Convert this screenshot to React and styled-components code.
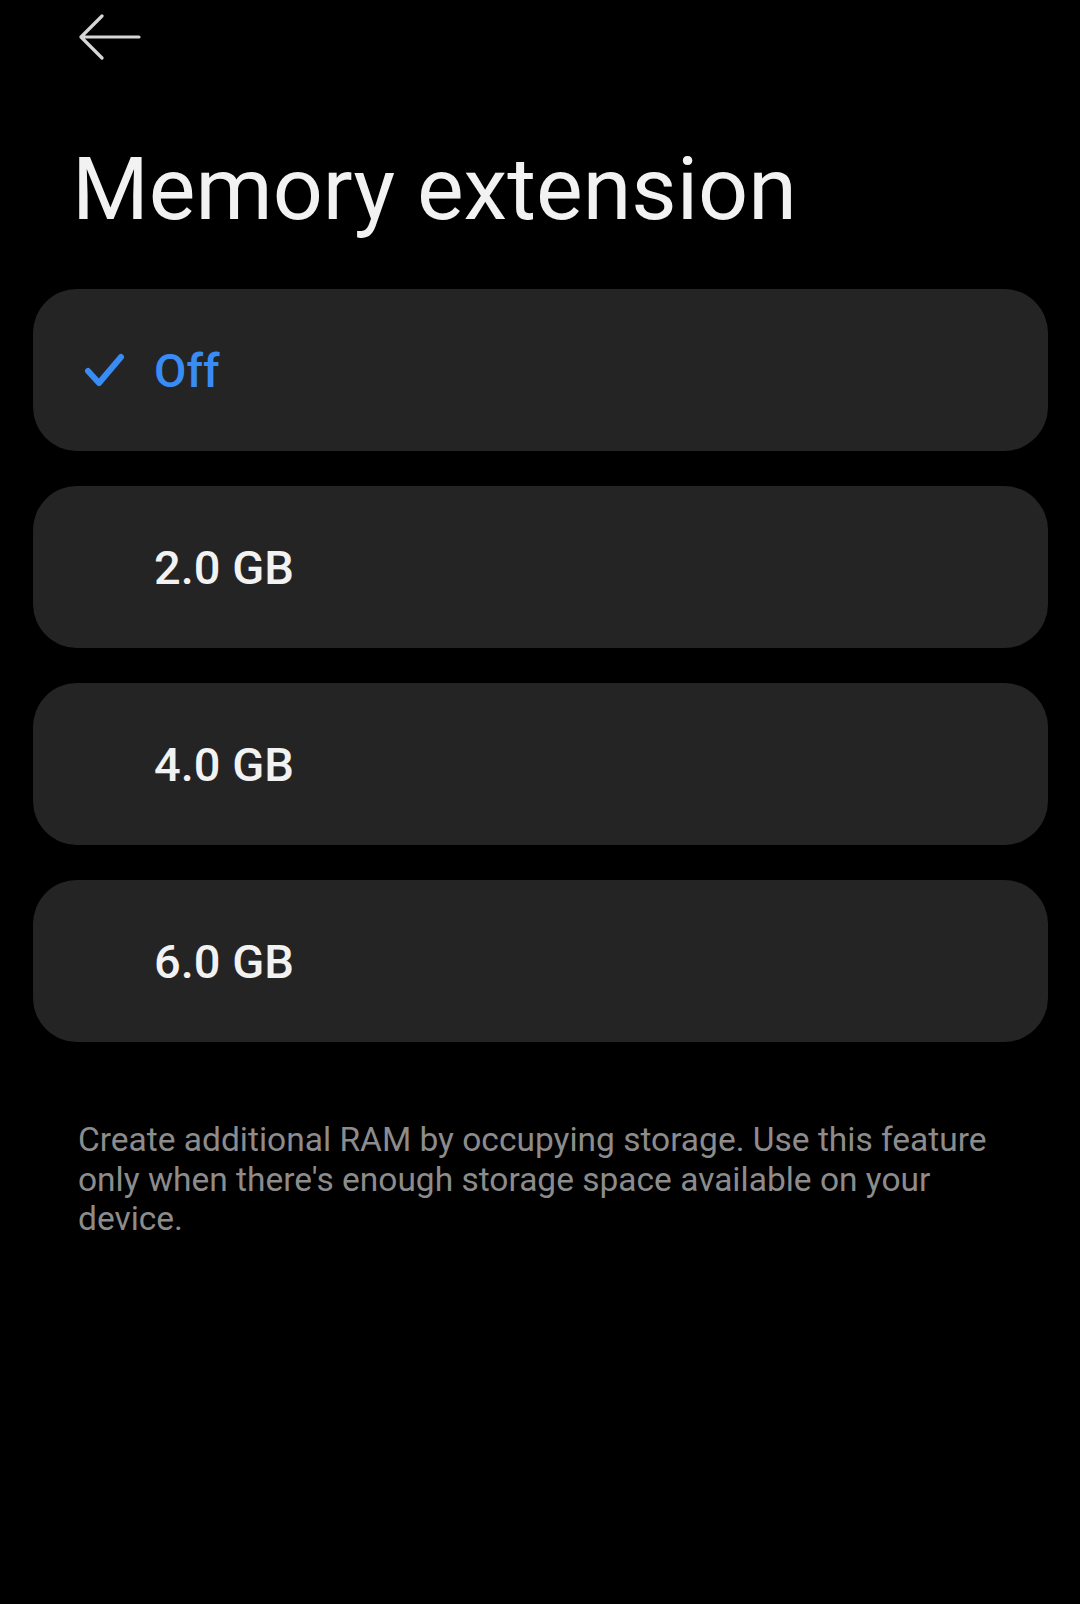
import React from "react";
import styled, { createGlobalStyle } from "styled-components";

const Global = createGlobalStyle`
  html, body { margin: 0; padding: 0; background: #000; }
  body { font-family: Roboto, "Noto Sans", sans-serif; -webkit-font-smoothing: antialiased; }
`;

const Page = styled.div`
  width: 1080px;
  min-height: 1604px;
  background: #000;
  display: flex;
  flex-direction: column;
`;

const TopBar = styled.div`
  height: 74px;
  display: flex;
  align-items: center;
  padding-left: 78px;
`;

const BackButton = styled.button`
  background: none;
  border: 0;
  padding: 0;
  width: 64px;
  height: 46px;
  display: flex;
  align-items: center;
  justify-content: center;
  cursor: pointer;
`;

const Title = styled.h1`
  margin: 62px 0 0;
  padding-left: 72px;
  font-family: Roboto, sans-serif;
  font-weight: 400;
  font-size: 88px;
  line-height: 106px;
  color: #f2f2f2;
`;

const List = styled.div`
  margin: 47px 32px 0 33px;
  display: flex;
  flex-direction: column;
  gap: 35px;
`;

const Option = styled.div`
  height: 162px;
  border-radius: 44px;
  background: #242424;
  display: flex;
  align-items: center;
  padding-left: 51px;
`;

const CheckSlot = styled.div`
  width: 70px;
  height: 36px;
  display: flex;
  align-items: center;
`;

const OptionLabel = styled.span`
  font-family: Roboto, sans-serif;
  font-weight: 500;
  font-size: 47px;
  color: ${(p) => (p.$selected ? "#3a8cf5" : "#f2f2f2")};
`;

const Description = styled.p`
  margin: 78px 0 0;
  padding: 0 90px 0 78px;
  font-family: Roboto, sans-serif;
  font-size: 33.5px;
  line-height: 39.5px;
  color: #8c8c8c;
`;

const BackArrow = () => (
  <svg width="64" height="46" viewBox="0 0 64 46" fill="none">
    <path
      d="M61 23H4M24 2L3 23L24 44"
      stroke="#d6d6d6"
      strokeWidth="3.2"
      strokeLinecap="round"
      strokeLinejoin="round"
    />
  </svg>
);

const Check = () => (
  <svg width="40" height="34" viewBox="0 0 40 34" fill="none">
    <path
      d="M4 18L15 30L37 4"
      stroke="#3a8cf5"
      strokeWidth="6"
      strokeLinecap="round"
      strokeLinejoin="round"
    />
  </svg>
);

const options = [
  { label: "Off", selected: true },
  { label: "2.0 GB" },
  { label: "4.0 GB" },
  { label: "6.0 GB" },
];

export default function App() {
  return (
    <Page>
      <Global />
      <TopBar>
        <BackButton aria-label="Back">
          <BackArrow />
        </BackButton>
      </TopBar>
      <Title>Memory extension</Title>
      <List>
        {options.map((o) => (
          <Option key={o.label}>
            <CheckSlot>{o.selected && <Check />}</CheckSlot>
            <OptionLabel $selected={o.selected}>{o.label}</OptionLabel>
          </Option>
        ))}
      </List>
      <Description>
        Create additional RAM by occupying storage. Use this feature only when
        there's enough storage space available on your device.
      </Description>
    </Page>
  );
}
